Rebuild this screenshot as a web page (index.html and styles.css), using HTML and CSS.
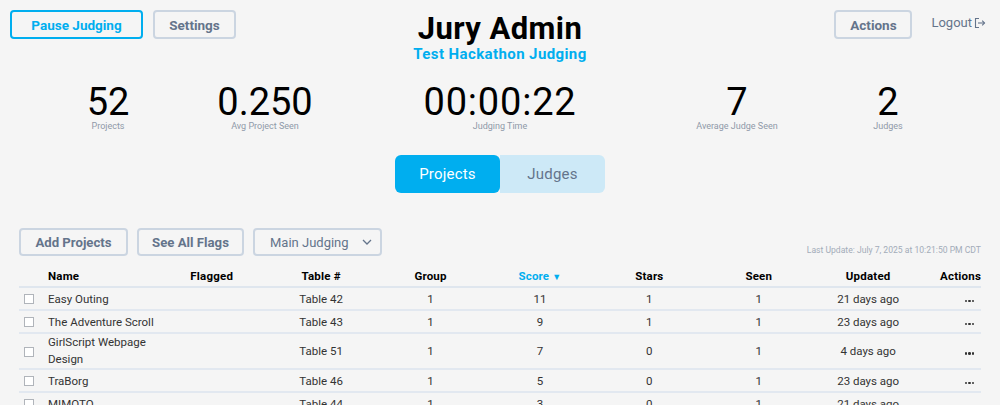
FILE: index.html
```html
<!DOCTYPE html>
<html lang="en">
	<head>
		<meta charset="utf-8">
		<title>Jury Admin</title>
		<link rel="stylesheet" href="styles.css">
	</head>
	<body>
		<div class="page">
			<header class="top">
				<div class="top-left">
					<button class="btn btn-primary btn-pause">Pause Judging</button>
					<button class="btn btn-settings">Settings</button>
				</div>
				<div class="title-block">
					<h1 class="title">Jury Admin</h1>
					<p class="subtitle">Test Hackathon Judging</p>
				</div>
				<div class="top-right">
					<button class="btn btn-actions">Actions</button>
					<a class="logout">Logout
						<svg class="logout-icon" viewBox="0 0 12 12" width="12" height="12" fill="none" stroke="#64748b" stroke-width="1.1">
							<path d="M5 1.5H1.5v9H5"/>
							<path d="M4 6h6.5"/>
							<path d="M8.2 3.7 10.5 6 8.2 8.3"/>
						</svg>
					</a>
				</div>
			</header>

			<section class="stats">
				<div class="stat stat-projects"><div class="stat-num">52</div><div class="stat-label">Projects</div></div>
				<div class="stat stat-avg"><div class="stat-num">0.250</div><div class="stat-label">Avg Project Seen</div></div>
				<div class="stat stat-time"><div class="stat-num">00:00:22</div><div class="stat-label">Judging Time</div></div>
				<div class="stat stat-seen"><div class="stat-num">7</div><div class="stat-label">Average Judge Seen</div></div>
				<div class="stat stat-judges"><div class="stat-num">2</div><div class="stat-label">Judges</div></div>
			</section>

			<div class="tabs">
				<button class="tab tab-active">Projects</button>
				<button class="tab tab-idle">Judges</button>
			</div>

			<div class="toolbar">
				<div class="toolbar-left">
					<button class="btn btn-small btn-add">Add Projects</button>
					<button class="btn btn-small btn-flags">See All Flags</button>
					<div class="select">
						<span>Main Judging</span>
						<svg viewBox="0 0 10 6" width="10" height="6" fill="none" stroke="#64748b" stroke-width="1.3"><path d="M1 1l4 4 4-4"/></svg>
					</div>
				</div>
				<div class="updated">Last Update: July 7, 2025 at 10:21:50 PM CDT</div>
			</div>

			<table class="grid">
				<colgroup>
					<col class="col-check">
					<col class="col-name">
					<col class="col-data"><col class="col-data"><col class="col-data"><col class="col-data"><col class="col-data"><col class="col-data"><col class="col-data">
					<col class="col-actions">
				</colgroup>
				<thead>
					<tr>
						<th></th>
						<th class="left">Name</th>
						<th>Flagged</th>
						<th>Table #</th>
						<th>Group</th>
						<th class="sorted">Score <span class="arrow">▼</span></th>
						<th>Stars</th>
						<th>Seen</th>
						<th>Updated</th>
						<th class="right">Actions</th>
					</tr>
				</thead>
				<tbody>
					<tr>
						<td><span class="check"></span></td><td class="left">Easy Outing</td><td></td><td>Table 42</td><td>1</td><td>11</td><td>1</td><td>1</td><td>21 days ago</td><td class="dots"><span></span><span></span><span></span></td>
					</tr>
					<tr>
						<td><span class="check"></span></td><td class="left">The Adventure Scroll</td><td></td><td>Table 43</td><td>1</td><td>9</td><td>1</td><td>1</td><td>23 days ago</td><td class="dots"><span></span><span></span><span></span></td>
					</tr>
					<tr>
						<td><span class="check"></span></td><td class="left two-line">GirlScript Webpage Design</td><td></td><td>Table 51</td><td>1</td><td>7</td><td>0</td><td>1</td><td>4 days ago</td><td class="dots"><span></span><span></span><span></span></td>
					</tr>
					<tr>
						<td><span class="check"></span></td><td class="left">TraBorg</td><td></td><td>Table 46</td><td>1</td><td>5</td><td>0</td><td>1</td><td>23 days ago</td><td class="dots"><span></span><span></span><span></span></td>
					</tr>
					<tr>
						<td><span class="check"></span></td><td class="left">MIMOTO</td><td></td><td>Table 44</td><td>1</td><td>3</td><td>0</td><td>1</td><td>21 days ago</td><td class="dots"><span></span><span></span><span></span></td>
					</tr>
				</tbody>
			</table>
		</div>
	</body>
</html>
```

FILE: styles.css
```css
html, body {
	margin: 0;
	height: 405px;
	overflow: hidden;
	background-color: #f5f5f5;
	font-family: Roboto, "Liberation Sans", sans-serif;
	color: #000;
}

.page {
	padding: 10px 19px 0 10px;
}

/* header row */
.top {
	display: grid;
	grid-template-columns: 1fr auto 1fr;
	height: 63px;
}

.top-left {
	display: flex;
	align-items: flex-start;
	gap: 10px;
}

.top-right {
	display: flex;
	align-items: flex-start;
	justify-content: flex-end;
	margin-right: -5px;
}

.btn {
	height: 29px;
	background: transparent;
	border: 2px solid #cbd5e1;
	border-radius: 4px;
	color: #64748b;
	font-family: inherit;
	font-size: 13.5px;
	font-weight: 700;
	padding: 0;
}

.btn-primary {
	border-color: #00aeef;
	color: #00aeef;
}

.btn-pause { width: 133px; }
.btn-settings { width: 83px; }
.btn-actions { width: 78px; }

.btn-small {
	height: 28px;
	font-size: 13.2px;
}

.btn-add { width: 109px; }
.btn-flags { width: 107px; }

.title-block {
	text-align: center;
	padding-top: 2px;
	padding-left: 9px;
}

.title {
	margin: 0;
	font-size: 31px;
	line-height: 33px;
	font-weight: 700;
	letter-spacing: 0.4px;
}

.subtitle {
	margin: 0;
	font-size: 15px;
	line-height: 19px;
	font-weight: 700;
	color: #00aeef;
	letter-spacing: 0.4px;
}

.logout {
	display: flex;
	align-items: center;
	gap: 2px;
	margin-left: 19px;
	margin-top: 5px;
	font-size: 13px;
	line-height: 16px;
	color: #64748b;
}

/* stats */
.stats {
	position: relative;
	height: 49px;
	margin-top: 10px;
}

.stat {
	position: absolute;
	top: 0;
	transform: translateX(-50%);
	text-align: center;
	white-space: nowrap;
}

.stat-projects { left: 98px; }
.stat-avg { left: 255px; }
.stat-time { left: 490px; }
.stat-seen { left: 727px; }
.stat-judges { left: 878px; }

.stat-num {
	font-size: 38px;
	line-height: 38px;
}

.stat-time .stat-num {
	letter-spacing: 0.8px;
}

.stat-label {
	font-size: 9px;
	line-height: 10px;
	color: #8f99a8;
}

/* tabs */
.tabs {
	display: flex;
	justify-content: center;
	margin-top: 23px;
	padding-left: 9px;
}

.tab {
	width: 105px;
	height: 38px;
	border: 0;
	font-family: inherit;
	font-size: 15px;
	letter-spacing: 0.2px;
	padding: 0;
}

.tab-active {
	background-color: #00aeef;
	color: #fff;
	border-radius: 6px;
}

.tab-idle {
	background-color: #cde9f7;
	color: #64748b;
	border-radius: 0 6px 6px 0;
}

/* toolbar above the table */
.toolbar {
	display: flex;
	justify-content: space-between;
	align-items: flex-end;
	margin: 35px 0 0 9px;
}

.toolbar-left {
	display: flex;
	gap: 9px;
}

.select {
	display: flex;
	align-items: center;
	justify-content: space-between;
	box-sizing: border-box;
	width: 129px;
	height: 28px;
	padding: 0 8px 0 15px;
	border: 2px solid #cbd5e1;
	border-radius: 4px;
	font-size: 13px;
	color: #64748b;
}

.updated {
	font-size: 8.6px;
	line-height: 12px;
	color: #a3acb9;
}

/* data table */
.grid {
	width: 962px;
	margin: 8px 0 0 9px;
	border-collapse: collapse;
	table-layout: fixed;
	font-size: 11.5px;
}

.col-check { width: 29px; }
.col-name { width: 109px; }
.col-data { width: 109.4px; }
.col-actions { width: 58px; }

.grid th {
	height: 21px;
	padding: 1px 0 0;
	font-size: 11.5px;
	font-weight: 700;
	letter-spacing: 0.2px;
	border-bottom: 2px solid #dfe6ee;
}

.grid td {
	height: 20px;
	padding: 1px 0 0;
	text-align: center;
	line-height: 17px;
	color: #333;
	border-bottom: 2px solid #e2e8f0;
}

.grid .left { text-align: left; }
.grid .right { text-align: right; }
.grid .two-line { padding-top: 0; }

.grid .sorted { color: #00aeef; }
.arrow { font-size: 9px; }

.check {
	display: block;
	box-sizing: border-box;
	width: 10px;
	height: 10px;
	margin-left: 5px;
	background: #fff;
	border: 1px solid #b0b4ba;
}

.grid .dots {
	height: 16px;
	text-align: right;
	padding: 5px 7px 0 0;
	font-size: 0;
	line-height: 0;
}

.dots span {
	display: inline-block;
	width: 2.5px;
	height: 2.5px;
	margin-left: 1px;
	border-radius: 50%;
	background-color: #333;
}
```
